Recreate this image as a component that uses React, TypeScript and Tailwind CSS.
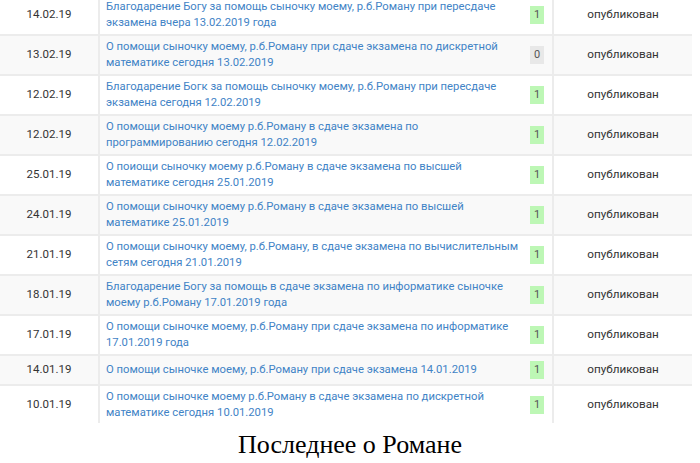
const rows = [
  { date: "14.02.19", title: "Благодарение Богу за помощь сыночку моему, р.б.Роману при пересдаче экзамена вчера 13.02.2019 года", count: 1 },
  { date: "13.02.19", title: "О помощи сыночку моему, р.б.Роману при сдаче экзамена по дискретной математике сегодня 13.02.2019", count: 0 },
  { date: "12.02.19", title: "Благодарение Богк за помощь сыночку моему, р.б.Роману при пересдаче экзамена сегодня 12.02.2019", count: 1 },
  { date: "12.02.19", title: "О помощи сыночку моему р.б.Роману в сдаче экзамена по программированию сегодня 12.02.2019", count: 1 },
  { date: "25.01.19", title: "О поиощи сыночку моему р.б.Роману в сдаче экзамена по высшей математике сегодня 25.01.2019", count: 1 },
  { date: "24.01.19", title: "О помощи сыночку моему р.б.Роману в сдаче экзамена по высшей математике 25.01.2019", count: 1 },
  { date: "21.01.19", title: "О помощи сыночку моему, р.б.Роману, в сдаче экзамена по вычислительным сетям сегодня 21.01.2019", count: 1 },
  { date: "18.01.19", title: "Благодарение Богу за помощь в сдаче экзамена по информатике сыночке моему р.б.Роману 17.01.2019 года", count: 1 },
  { date: "17.01.19", title: "О помощи сыночке моему, р.б.Роману при сдаче экзамена по информатике 17.01.2019 года", count: 1 },
  { date: "14.01.19", title: "О помощи сыночке моему, р.б.Роману при сдаче экзамена 14.01.2019", count: 1 },
  { date: "10.01.19", title: "О помощи сыночке моему р.б.Роману в сдаче экзамена по дискретной математике сегодня 10.01.2019", count: 1 },
]

export default function App() {
  return (
    <div className="w-[700px] h-[463px] overflow-hidden bg-white">
      <div className="w-[692px] overflow-hidden h-[423px]">
        <div className="mt-[-4px] font-['Roboto',sans-serif] text-[11.5px]">
          {rows.map((row, i) => (
            <div
              key={i}
              className={`grid grid-cols-[100px_452px_140px] border-b-2 border-[#ececec] ${i % 2 === 1 ? "bg-[#f9f9f9]" : "bg-white"}`}
            >
              <div className="flex items-center justify-center border-r-2 border-[#ececec] text-[#333]">
                {row.date}
              </div>
              <div className="flex items-center justify-between min-h-[28px] pl-[6px] pr-[8px] py-[3px]">
                <a href="#" className="w-[416px] leading-[16px] text-[11.25px] text-[#3f83c6]">
                  {row.title}
                </a>
                <span
                  className={`flex h-[18px] w-[14px] shrink-0 items-center justify-center text-[11px] text-[#555] ${row.count > 0 ? "bg-[#bdf7b5]" : "bg-[#e8e8e8]"}`}
                >
                  {row.count}
                </span>
              </div>
              <div className="flex items-center justify-center border-l-2 border-[#ececec] text-[11.7px] text-[#333]">
                опубликован
              </div>
            </div>
          ))}
        </div>
      </div>
      <h2 className="mt-[7px] text-center font-['Liberation_Serif',serif] text-[26px] leading-[30px] text-black">
        Последнее о Романе
      </h2>
    </div>
  )
}
